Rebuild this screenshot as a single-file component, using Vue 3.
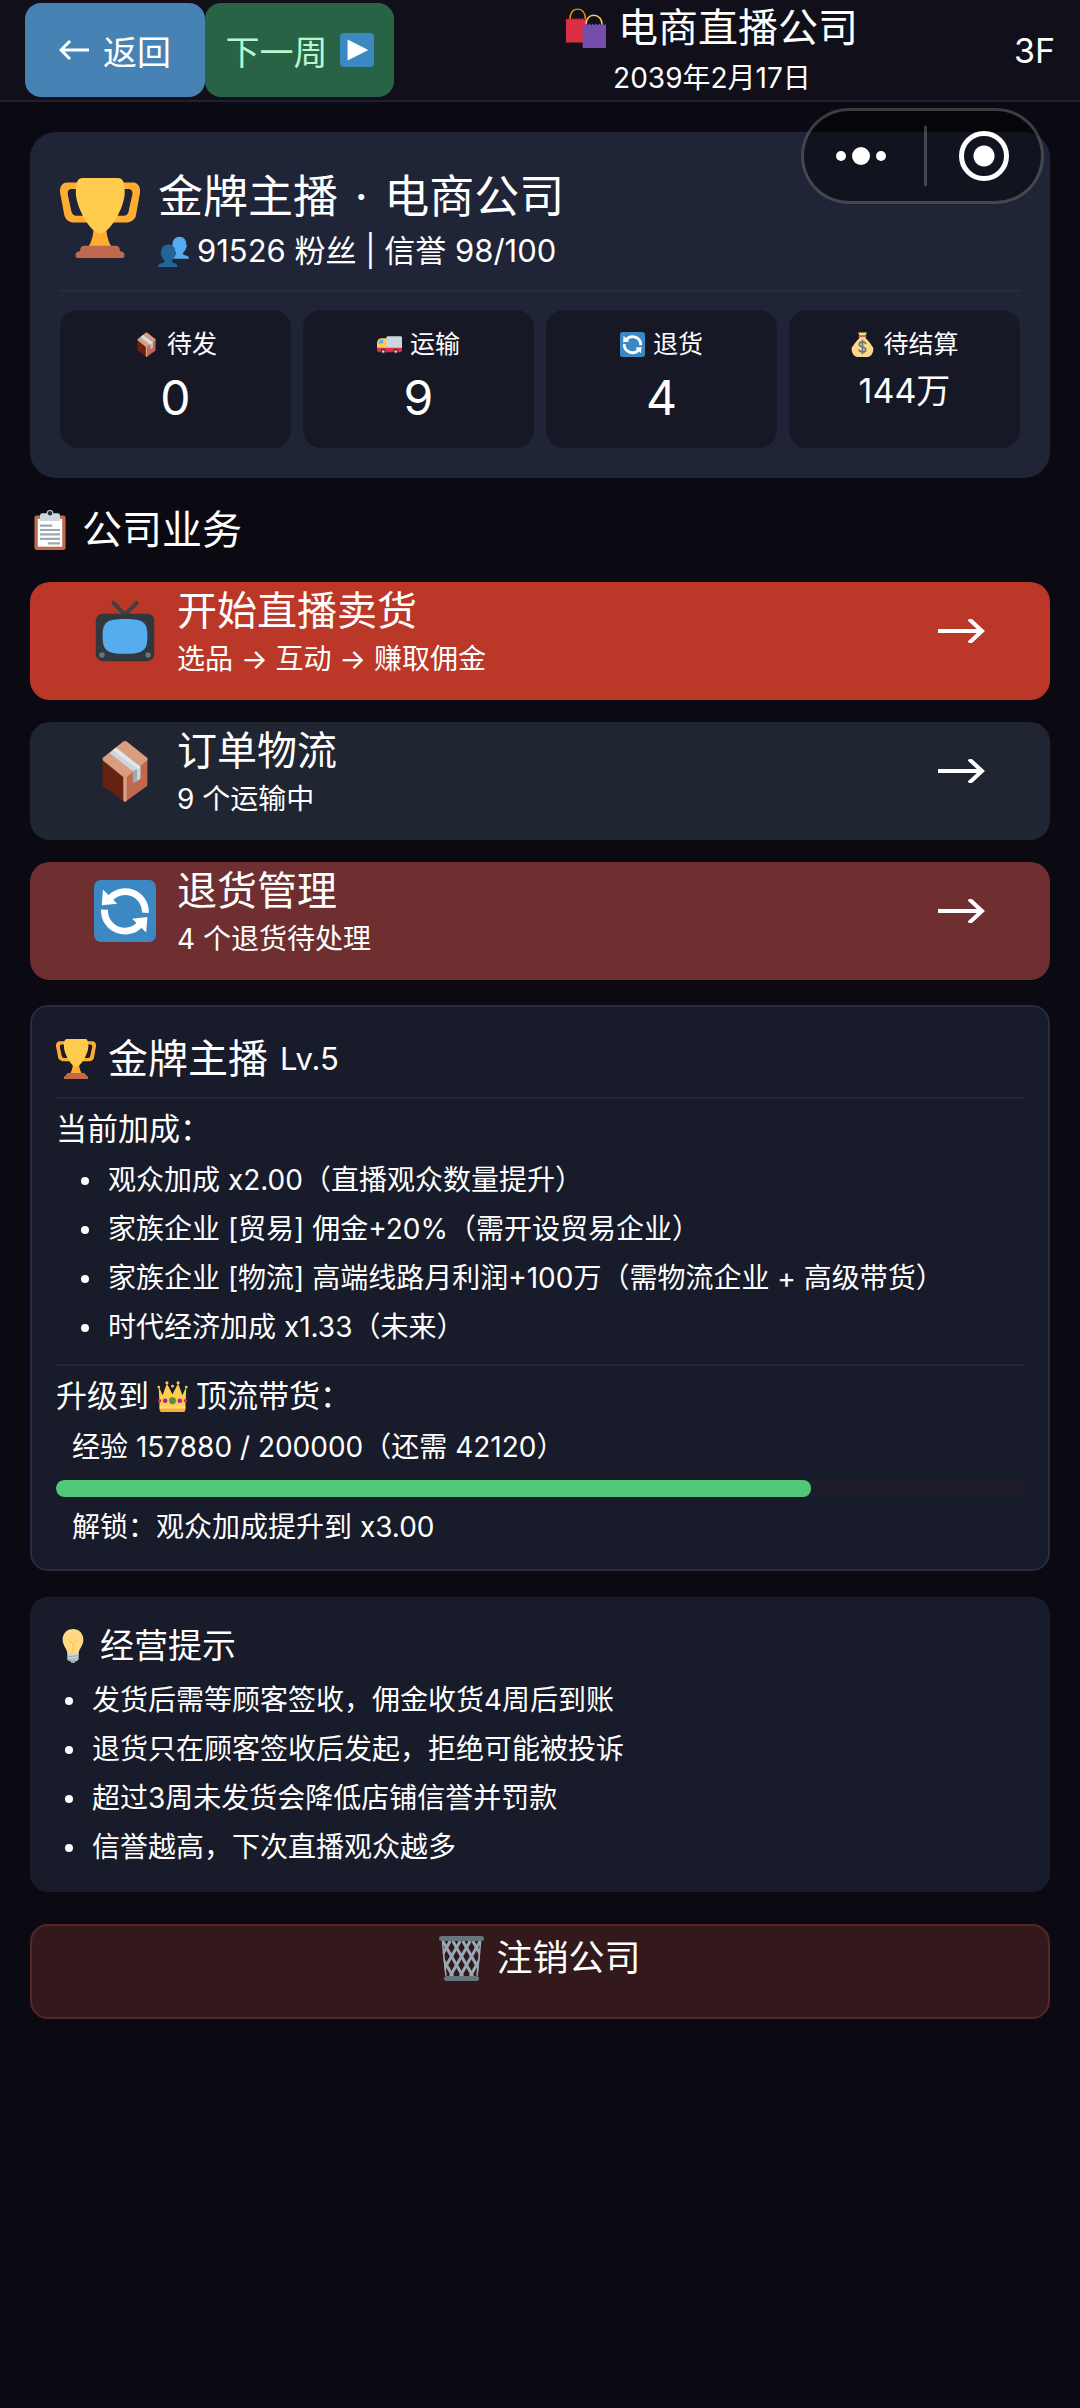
<script setup>
import { computed, ref } from 'vue';

const stats = ref([
    { icon: 'package', label: '待发', value: '0' },
    { icon: 'truck', label: '运输', value: '9' },
    { icon: 'refresh', label: '退货', value: '4' },
    { icon: 'money', label: '待结算', value: '144万', small: true },
]);

const actions = [
    { icon: 'tv', type: 'live', title: '开始直播卖货', desc: '选品 → 互动 → 赚取佣金' },
    { icon: 'package', type: 'order', title: '订单物流', desc: '9 个运输中' },
    { icon: 'refresh', type: 'refund', title: '退货管理', desc: '4 个退货待处理' },
];

const bonuses = [
    '观众加成 x2.00（直播观众数量提升）',
    '家族企业 [贸易] 佣金+20%（需开设贸易企业）',
    '家族企业 [物流] 高端线路月利润+100万（需物流企业 + 高级带货）',
    '时代经济加成 x1.33（未来）',
];

const tips = [
    '发货后需等顾客签收，佣金收货4周后到账',
    '退货只在顾客签收后发起，拒绝可能被投诉',
    '超过3周未发货会降低店铺信誉并罚款',
    '信誉越高，下次直播观众越多',
];

const exp = ref(157880);
const nextExp = ref(200000);
const percent = computed(() => Math.floor((exp.value / nextExp.value) * 100));
</script>

<template>
    <svg class="sprite" aria-hidden="true">
        <symbol id="i-trophy" viewBox="0 0 36 36">
            <path fill="#FFAC33" d="M5.123 5h6C12.227 5 13 4.896 13 6V4c0-1.104-.773-2-1.877-2h-8c-2 0-3.583 2.125-3 5 0 0 1.791 9.375 1.917 9.958C2.373 18.5 4.164 20 6.081 20h6.958c1.105 0-.039-1.896-.039-3v-2c0 1.104-.773 2-1.877 2h-4c-1.104 0-1.833-1.042-2-2S3.539 7.667 3.539 7.667C3.206 5.75 4.018 5 5.123 5zm25.812 0h-6C23.831 5 22 4.896 22 6V4c0-1.104 1.831-2 2.935-2h8c2 0 3.584 2.125 3 5 0 0-1.633 9.419-1.771 10-.354 1.5-2.042 3-4 3h-7.146C21.914 20 22 18.104 22 17v-2c0 1.104 1.831 2 2.935 2h4c1.104 0 1.834-1.042 2-2s1.584-7.333 1.584-7.333C32.851 5.75 32.04 5 30.935 5zM20.832 22c0-6.958-2.709 0-2.709 0s-3-6.958-3 0-3.291 10-3.291 10h12.292s-3.292-3.042-3.292-10z" />
            <path fill="#FFCC4D" d="M29.123 6.577c0 6.775-6.77 18.423-11 18.423-4.231 0-11-11.648-11-18.423C7.123 1.469 8.123 0 10.123 0h16c1.999 0 3 1.469 3 6.577z" />
            <path fill="#C1694F" d="M27 33c0-1.7-.8-2.500-2-2.500H11c-1.200 0-2 .8-2 2.500-1.100 0-2 .6-2 1.500v.5c0 .6.4 1 1 1h20c.6 0 1-.4 1-1v-.5c0-.9-.9-1.500-2-1.500z" />
        </symbol>
        <symbol id="i-users" viewBox="0 0 36 36">
            <path fill="#55ACEE" d="M36 26.500c0-3-2.600-3.900-5.600-4.400-1.500-.3-1.600-2.300-.6-3.400 1.700-1.600 2.500-3.200 2.900-5.400 1-.3 1.300-3 .2-3.200C33 5 30 1 25 1s-8 3.500-8 8.500c-1.100.4-.8 3.300.2 3.600.4 2.300 1.300 4 2.900 5.600 1 1.100.9 3.100-.6 3.400-3 .5-3.500 1.400-3.500 4.400z" />
            <path fill="#226699" d="M22.700 36c0-3-1.800-4.300-4.800-4.800-1.900-.3-1.900-2.500-.8-3.600 1.600-1.600 2.500-3.300 2.900-5.500 1.100-.3 1.300-3 .2-3.300C20.200 13.500 17.300 10 12 10c-5.200 0-8.200 3.500-8.200 8.800-1.100.3-.9 3 .2 3.300.4 2.200 1.300 3.900 2.900 5.500 1.100 1.100 1.100 3.300-.8 3.600C3.100 31.700 0 33 0 36z" />
        </symbol>
        <symbol id="i-bags" viewBox="0 0 36 36">
            <path fill="none" stroke="#F4900C" stroke-width="1.3" d="M3.500 10.500C3.500 4 6.500 1 10.500 1s7 3 7 9.500" />
            <path fill="#DD2E44" d="M0 9l1.500 1.500L3 9l1.500 1.500L6 9l1.500 1.500L9 9l1.500 1.500L12 9l1.500 1.500L15 9l1.500 1.500L18 9l1 1v21H0z" />
            <path fill="none" stroke="#FFCC4D" stroke-width="1.3" d="M18 15.500C18 9.500 21 6.500 25 6.500s7.500 3 7.500 9" />
            <path fill="#744EAA" d="M15 14l1.500 1.500L18 14l1.500 1.500L21 14l1.500 1.500L24 14l1.500 1.500L27 14l1.500 1.500L30 14l1.500 1.500L33 14l1.500 1.500L36 14v22H15z" />
        </symbol>
        <symbol id="i-play" viewBox="0 0 36 36">
            <rect width="36" height="36" rx="4" fill="#3B88C3" />
            <path fill="#FFF" d="M8 7l22 11L8 29z" />
        </symbol>
        <symbol id="i-package" viewBox="0 0 36 36">
            <path fill="#662113" d="M18 36L5.800 27.200c-.6-.4-.8-.9-.8-1.500V10.500L18 21z" />
            <path fill="#C1694F" d="M18 36l12.200-8.800c.6-.4.8-.9.8-1.500V10.500L18 21z" />
            <path fill="#D99E82" d="M31 10.500L19.200 1c-.8-.6-1.600-.6-2.400 0L5 10.500v1.200l11.800 9.700c.8.6 1.600.6 2.400 0L31 11.700z" />
            <path fill="#D99E82" d="M17 21h2v14.300l-1 .7-1-.7z" />
            <path fill="#CCD6DD" d="M9 7.500L12.800 4.500 27 15.600v6.200c0 .6-.3 1-.8 1.300l-2.200 1.300v-5.200z" />
            <path fill="#E1E8ED" d="M11 5.900l1.800-1.400L27 15.600l-1.500 1.200z" />
            <path fill="#99AAB5" d="M22.500 18.200L25 17v6.800l-1.700 1c-.5.200-.8 0-.8-.5z" />
        </symbol>
        <symbol id="i-truck" viewBox="0 0 36 36">
            <path fill="#FFCC4D" d="M0 25V17c0-5 2-8 6-8h9v16z" />
            <path fill="#55ACEE" d="M2 16.500c.5-4 2-5.500 4.500-5.500H9v5.500z" />
            <path fill="#CCD6DD" d="M13.500 8c0-1.100.9-2 2-2H34c1.100 0 2 .9 2 2v15H13.500z" />
            <path fill="#DD2E44" d="M0 22.500h36V26c0 2-1 3-3 3H3c-2 0-3-1-3-3z" />
            <circle cx="9" cy="28" r="3.5" fill="#292F33" />
            <circle cx="9" cy="28" r="1.9" fill="#CCD6DD" />
            <circle cx="27" cy="28" r="3.5" fill="#292F33" />
            <circle cx="27" cy="28" r="1.9" fill="#CCD6DD" />
        </symbol>
        <symbol id="i-refresh" viewBox="0 0 36 36">
            <rect width="36" height="36" rx="4" fill="#3B88C3" />
            <g fill="none" stroke="#FFF" stroke-width="4">
                <path d="M8.700 11.500A11.700 11.700 0 0 1 29.800 19" />
                <path d="M6.100 17.200A11.800 11.800 0 0 0 27.300 25" />
            </g>
            <path fill="#FFF" d="M5.200 5.500l8.300 8.300-9 .8zM31 21.500l-.7 9-8.200-8z" />
        </symbol>
        <symbol id="i-money" viewBox="0 0 36 36">
            <path fill="#FDD888" d="M31.900 20.400c-1.200-2.500-3.100-4.900-5.200-7.100-2.200-2.300-4.200-3.700-4.700-6.300h-8c-.5 2.600-2.500 4-4.700 6.300-2.100 2.200-4 4.600-5.200 7.100-2.500 1.500-1.800 6-1.100 8 .9 4.200 4.400 7.600 8.500 7.600h13c4.100 0 7.600-3.400 8.500-7.600.7-2 1.400-6.500-1.100-8z" />
            <path fill="#FDD888" d="M14 5.500c-1-1.500-2-3-2-5 1 .8 2 .8 3 0 1 .8 2 .8 3 0 1 .8 2 .8 3 0 1 .8 2 .8 3 0 0 2-1 3.500-2 5z" />
            <rect x="12" y="4.5" width="12" height="2.6" rx="1.3" fill="#BF6952" />
            <path fill="none" stroke="#67757F" stroke-width="2.4" stroke-linecap="round" d="M22.500 16.500c-.8-1.600-2.500-2.200-4.500-2.200-2.600 0-4.600 1.300-4.600 3.600 0 5 9.300 2.300 9.300 7.200 0 2.300-2 3.700-4.700 3.700-2.300 0-4.200-.9-4.900-2.700M18 12v19" />
        </symbol>
        <symbol id="i-clipboard" viewBox="0 0 36 36">
            <rect x="4" y="5" width="28" height="31" rx="2" fill="#C1694F" />
            <path fill="#FFF" d="M7 8h22v25H7z" />
            <path fill="#CCD6DD" d="M25 3h-4a3 3 0 1 0-6 0h-4a2 2 0 0 0-2 2v5h18V5a2 2 0 0 0-2-2z" />
            <circle cx="18" cy="3" r="2" fill="#292F33" />
            <path stroke="#99AAB5" stroke-width="2" d="M9 14h11M9 18h18M9 22h18M9 26h18M16 30h11" />
        </symbol>
        <symbol id="i-tv" viewBox="0 0 36 36">
            <path fill="none" stroke="#414042" stroke-width="2.4" stroke-linecap="round" d="M18 8.500L11.300 1.700M18 8.500l6.700-6.800" />
            <rect x="1" y="8" width="34" height="27.5" rx="4" fill="#31373D" />
            <path fill="#55ACEE" d="M31 21c0 8-2 10.200-13 10.200S5 29 5 21s2-10 13-10 13 2 13 10z" />
            <circle cx="4.6" cy="32" r="1.6" fill="#67757F" />
            <circle cx="31.4" cy="32" r="1.6" fill="#67757F" />
        </symbol>
        <symbol id="i-crown" viewBox="0 0 36 36">
            <path fill="#F4900C" d="M14.200 10.600l1.200 9.400H5.200zM21.800 10.600L20.600 20h10.200z" />
            <path fill="#F4900C" d="M8.500 11.500L13 18H8zM27.500 11.500L23 18h5z" />
            <path fill="#FFCC4D" d="M34 6.500l-4.500 10-5-13.500L18 15.500 11.500 3l-5 13.500L2 6.500 3 32h30z" />
            <path fill="#FFAC33" d="M3 31h30v2c0 1.600-1 3-2.500 3h-25C4 36 3 34.600 3 33z" />
            <path fill="#FFD983" d="M3 29.500h30V32H3z" />
            <g fill="#FFCC4D">
                <circle cx="2" cy="7" r="1.6" />
                <circle cx="11.5" cy="2" r="1.8" />
                <circle cx="18" cy="6" r="1.6" />
                <circle cx="24.5" cy="2" r="1.8" />
                <circle cx="34" cy="7" r="1.6" />
            </g>
            <circle cx="18" cy="23" r="4" fill="#5C913B" />
            <g fill="#9228B8">
                <circle cx="9.5" cy="23" r="2.6" />
                <circle cx="26.5" cy="23" r="2.6" />
            </g>
            <g fill="#DD2E44">
                <circle cx="3" cy="23" r="2" />
                <circle cx="33" cy="23" r="2" />
            </g>
        </symbol>
        <symbol id="i-bulb" viewBox="0 0 36 36">
            <path fill="#FFD983" d="M29 11.100C29 5 24.500 0 18 0S7 5 7 11.100c0 7 5 9.900 5 14.900h12c0-5 5-7.900 5-14.900z" />
            <path fill="none" stroke="#FFCC4D" stroke-width="1.6" d="M13 11l5 5 5-5M18 16v10" />
            <path fill="#CCD6DD" d="M12 25.500h12V31c0 2-1.500 3-3 3h-6c-1.500 0-3-1-3-3z" />
            <path fill="#99AAB5" d="M15 33h6c0 2-1.200 3-3 3s-3-1-3-3z" />
            <path stroke="#99AAB5" stroke-width="1.2" d="M12 29.500l12-1.500M12 32.500l12-1.500" />
        </symbol>
        <symbol id="i-trash" viewBox="0 0 36 36">
            <clipPath id="trash-body">
                <path d="M2 4h32l-3 28H5z" />
            </clipPath>
            <g clip-path="url(#trash-body)" fill="none" stroke="#9AAAB4" stroke-width="2.4">
                <path d="M-5 4l16 28M3 4l16 28M11 4l16 28M19 4l16 28M27 4l16 28" />
                <path d="M41 4L25 32M33 4L17 32M25 4L9 32M17 4L1 32M9 4L-7 32" />
                <path d="M2 4l3 28M34 4l-3 28" />
            </g>
            <rect width="36" height="4" rx="2" fill="#67757F" />
            <rect x="4" y="32" width="28" height="4" rx="2" fill="#67757F" />
        </symbol>
    </svg>

    <div class="page">
        <header class="topbar">
            <button class="btn-back">
                <svg class="back-arrow" viewBox="0 0 30 20">
                    <path d="M30 10H2M11 1l-9 9 9 9" />
                </svg>
                返回
            </button>
            <button class="btn-next">
                下一周
                <svg class="icon"><use href="#i-play" /></svg>
            </button>
            <div class="topbar-title">
                <h1>
                    <svg class="icon"><use href="#i-bags" /></svg>
                    电商直播公司
                </h1>
                <p>2039年2月17日</p>
            </div>
            <span class="floor">3F</span>
        </header>

        <!-- mini program capsule, floats above the page -->
        <div class="capsule">
            <button class="capsule-menu" aria-label="更多">
                <i class="dot"></i>
                <i class="dot big"></i>
                <i class="dot"></i>
            </button>
            <button class="capsule-close" aria-label="关闭">
                <i class="ring"></i>
            </button>
        </div>

        <main class="content">
            <section class="company">
                <div class="company-head">
                    <svg class="icon company-icon"><use href="#i-trophy" /></svg>
                    <div>
                        <h2>金牌主播 <span class="sep">·</span> 电商公司</h2>
                        <p>
                            <svg class="icon"><use href="#i-users" /></svg>
                            91526 粉丝 | 信誉 98/100
                        </p>
                    </div>
                </div>
                <div class="stats">
                    <div v-for="item in stats" :key="item.label" class="stat">
                        <div class="stat-label">
                            <svg class="icon"><use :href="`#i-${item.icon}`" /></svg>
                            {{ item.label }}
                        </div>
                        <div :class="`stat-value ${item.small ? 'small' : ''}`">{{ item.value }}</div>
                    </div>
                </div>
            </section>

            <h2 class="section-title">
                <svg class="icon"><use href="#i-clipboard" /></svg>
                公司业务
            </h2>

            <div class="actions">
                <button v-for="item in actions" :key="item.type" :class="`action ${item.type}`">
                    <svg class="icon"><use :href="`#i-${item.icon}`" /></svg>
                    <span class="action-text">
                        <span class="action-title">{{ item.title }}</span>
                        <span class="action-desc">{{ item.desc }}</span>
                    </span>
                    <svg class="arrow" viewBox="0 0 48 24">
                        <path d="M0 12h44M31 0l13 12-13 12" />
                    </svg>
                </button>
            </div>

            <section class="level">
                <h2>
                    <svg class="icon"><use href="#i-trophy" /></svg>
                    金牌主播
                    <small>Lv.5</small>
                </h2>
                <h3>当前加成：</h3>
                <ul>
                    <li v-for="text in bonuses" :key="text">{{ text }}</li>
                </ul>
                <div class="upgrade">
                    <h3>
                        升级到
                        <svg class="icon"><use href="#i-crown" /></svg>
                        顶流带货：
                    </h3>
                    <p>经验 {{ exp }} / {{ nextExp }}（还需 {{ nextExp - exp }}）</p>
                    <div class="bar">
                        <div class="bar-fill" :style="{ width: percent + '%' }"></div>
                    </div>
                    <p>解锁：观众加成提升到 x3.00</p>
                </div>
            </section>

            <section class="tips">
                <h2>
                    <svg class="icon"><use href="#i-bulb" /></svg>
                    经营提示
                </h2>
                <ul>
                    <li v-for="text in tips" :key="text">{{ text }}</li>
                </ul>
            </section>

            <button class="btn-close">
                <svg class="icon"><use href="#i-trash" /></svg>
                注销公司
            </button>
        </main>
    </div>
</template>

<style>
body {
    background-color: #0b0a13;
}
</style>

<style scoped>
.sprite {
    position: absolute;
    width: 0;
    height: 0;
}

.page {
    position: relative;
    min-height: 100vh;
    color: #fff;
    font-family: Inter, "Noto Sans CJK SC", sans-serif;
    font-size: 28px;
}

h1, h2, h3, p, ul {
    margin: 0;
    padding: 0;
    font-weight: 400;
}

button {
    margin: 0;
    padding: 0;
    border: none;
    color: inherit;
    font-family: inherit;
    cursor: pointer;
}

.icon {
    flex: none;
    width: 1em;
    height: 1em;
}

/* top bar */
.topbar {
    display: flex;
    align-items: center;
    height: 100px;
    padding: 0 25px;
    background-color: #110f1a;
    border-bottom: 2px solid #211e2d;
}

.btn-back,
.btn-next {
    display: flex;
    align-items: center;
    justify-content: center;
    height: 94px;
    border-radius: 16px;
    font-size: 34px;
}

.btn-back {
    width: 180px;
    gap: 14px;
    background-color: #4682b4;
}

.back-arrow {
    width: 30px;
    height: 20px;
    fill: none;
    stroke: #fff;
    stroke-width: 3;
}

.btn-next {
    width: 189px;
    gap: 12px;
    background-color: #286346;
    color: #b9f6ce;
}

.topbar-title {
    flex: 1;
    padding: 4px 0 0 16px;
    text-align: center;
}

.topbar-title h1 {
    display: flex;
    align-items: center;
    justify-content: center;
    gap: 12px;
    font-size: 40px;
    line-height: 52px;
}

.topbar-title p {
    line-height: 48px;
}

.floor {
    font-size: 34px;
}

/* capsule */
.capsule {
    position: absolute;
    top: 108px;
    right: 36px;
    display: flex;
    align-items: center;
    width: 243px;
    height: 96px;
    box-sizing: border-box;
    border: 3px solid rgba(255, 255, 255, 0.22);
    border-radius: 48px;
    background-color: rgba(0, 0, 0, 0.45);
}

.capsule button {
    display: flex;
    flex: 1;
    align-items: center;
    justify-content: center;
    gap: 6px;
    height: 60px;
    background: none;
}

.capsule .capsule-menu {
    padding-right: 6px;
}

.capsule .capsule-close {
    border-left: 3px solid rgba(255, 255, 255, 0.22);
}

.dot {
    width: 10px;
    height: 10px;
    border-radius: 50%;
    background-color: #fff;
}

.dot.big {
    width: 18px;
    height: 18px;
}

.ring {
    width: 40px;
    height: 40px;
    border: 5px solid #fff;
    border-radius: 50%;
    background: radial-gradient(circle, #fff 10px, transparent 11px);
}

/* content */
.content {
    padding: 30px;
}

.company {
    padding: 30px;
    border-radius: 26px;
    background-color: #1f2437;
}

.company-head {
    display: flex;
    align-items: center;
    gap: 18px;
    height: 128px;
    border-bottom: 2px solid #2a2a3e;
}

.company-icon {
    width: 80px;
    height: 80px;
    margin-bottom: 16px;
}

.company-head h2 {
    font-size: 45px;
    line-height: 58px;
}

.sep {
    margin: 0 4px;
}

.company-head p {
    display: flex;
    align-items: center;
    gap: 8px;
    margin-bottom: 8px;
    font-size: 31px;
    line-height: 50px;
}

.stats {
    display: grid;
    grid-template-columns: repeat(4, 1fr);
    gap: 12px;
    padding-top: 18px;
}

.stat {
    padding: 16px 0 14px;
    border-radius: 18px;
    background-color: #161925;
    text-align: center;
}

.stat-label {
    display: flex;
    align-items: center;
    justify-content: center;
    gap: 8px;
    font-size: 25px;
    line-height: 36px;
}

.stat-value {
    font-size: 48px;
    line-height: 72px;
}

.stat-value.small {
    font-size: 34px;
    line-height: 58px;
}

.section-title {
    display: flex;
    align-items: center;
    gap: 12px;
    padding: 24px 0;
    font-size: 40px;
    line-height: 56px;
}

.actions {
    display: flex;
    flex-direction: column;
    gap: 22px;
}

.action {
    display: flex;
    align-items: center;
    padding: 0 64px 20px;
    border-radius: 20px;
    text-align: left;
}

.action .icon {
    width: 62px;
    height: 62px;
}

.action.live {
    background-color: #bb3828;
}

.action.order {
    background-color: #1f2632;
}

.action.refund {
    background-color: #6f2f31;
}

.action-text {
    flex: 1;
    padding: 2px 0 0 21px;
}

.action-title,
.action-desc {
    display: block;
}

.action-title {
    font-size: 40px;
    line-height: 54px;
}

.action-desc {
    font-size: 28px;
    line-height: 42px;
}

.arrow {
    width: 48px;
    height: 24px;
    fill: none;
    stroke: #fff;
    stroke-width: 4;
}

/* level card */
.level {
    margin-top: 25px;
    padding: 24px 24px 17px;
    border: 2px solid #262b3f;
    border-radius: 18px;
    background-color: #181b29;
}

.level h2 {
    display: flex;
    align-items: center;
    gap: 12px;
    padding-bottom: 10px;
    border-bottom: 2px solid #262637;
    font-size: 40px;
    line-height: 56px;
}

.level small {
    font-size: 31px;
}

.level h3 {
    display: flex;
    align-items: center;
    gap: 8px;
    padding: 6px 0 3px;
    font-size: 31px;
    line-height: 48px;
}

li {
    display: flex;
    align-items: center;
    gap: 19px;
    line-height: 49px;
}

li::before {
    content: "";
    width: 8px;
    height: 8px;
    border-radius: 50%;
    background-color: #fff;
}

.level ul {
    padding-left: 25px;
}

.upgrade {
    margin-top: 12px;
    border-top: 2px solid #262637;
}

.upgrade p {
    padding-left: 16px;
    line-height: 49px;
}

.bar {
    height: 17px;
    margin: 8px 0 6px;
    border-radius: 8px;
    background-color: #1e1d29;
    overflow: hidden;
}

.bar-fill {
    height: 100%;
    border-radius: 8px;
    background-color: #50c878;
}

/* tips card */
.tips {
    margin-top: 26px;
    padding: 24px 26px 20px;
    border-radius: 18px;
    background-color: #181b29;
}

.tips h2 {
    display: flex;
    align-items: center;
    gap: 10px;
    padding-bottom: 5px;
    font-size: 34px;
    line-height: 50px;
}

.tips ul {
    padding-left: 9px;
}

.btn-close {
    display: flex;
    justify-content: center;
    align-items: center;
    gap: 12px;
    width: 100%;
    margin-top: 32px;
    padding: 5px 0 32px;
    border: 2px solid #542629;
    border-radius: 18px;
    background-color: #33191b;
    font-size: 36px;
    line-height: 54px;
}

.btn-close .icon {
    width: 45px;
    height: 45px;
}
</style>
